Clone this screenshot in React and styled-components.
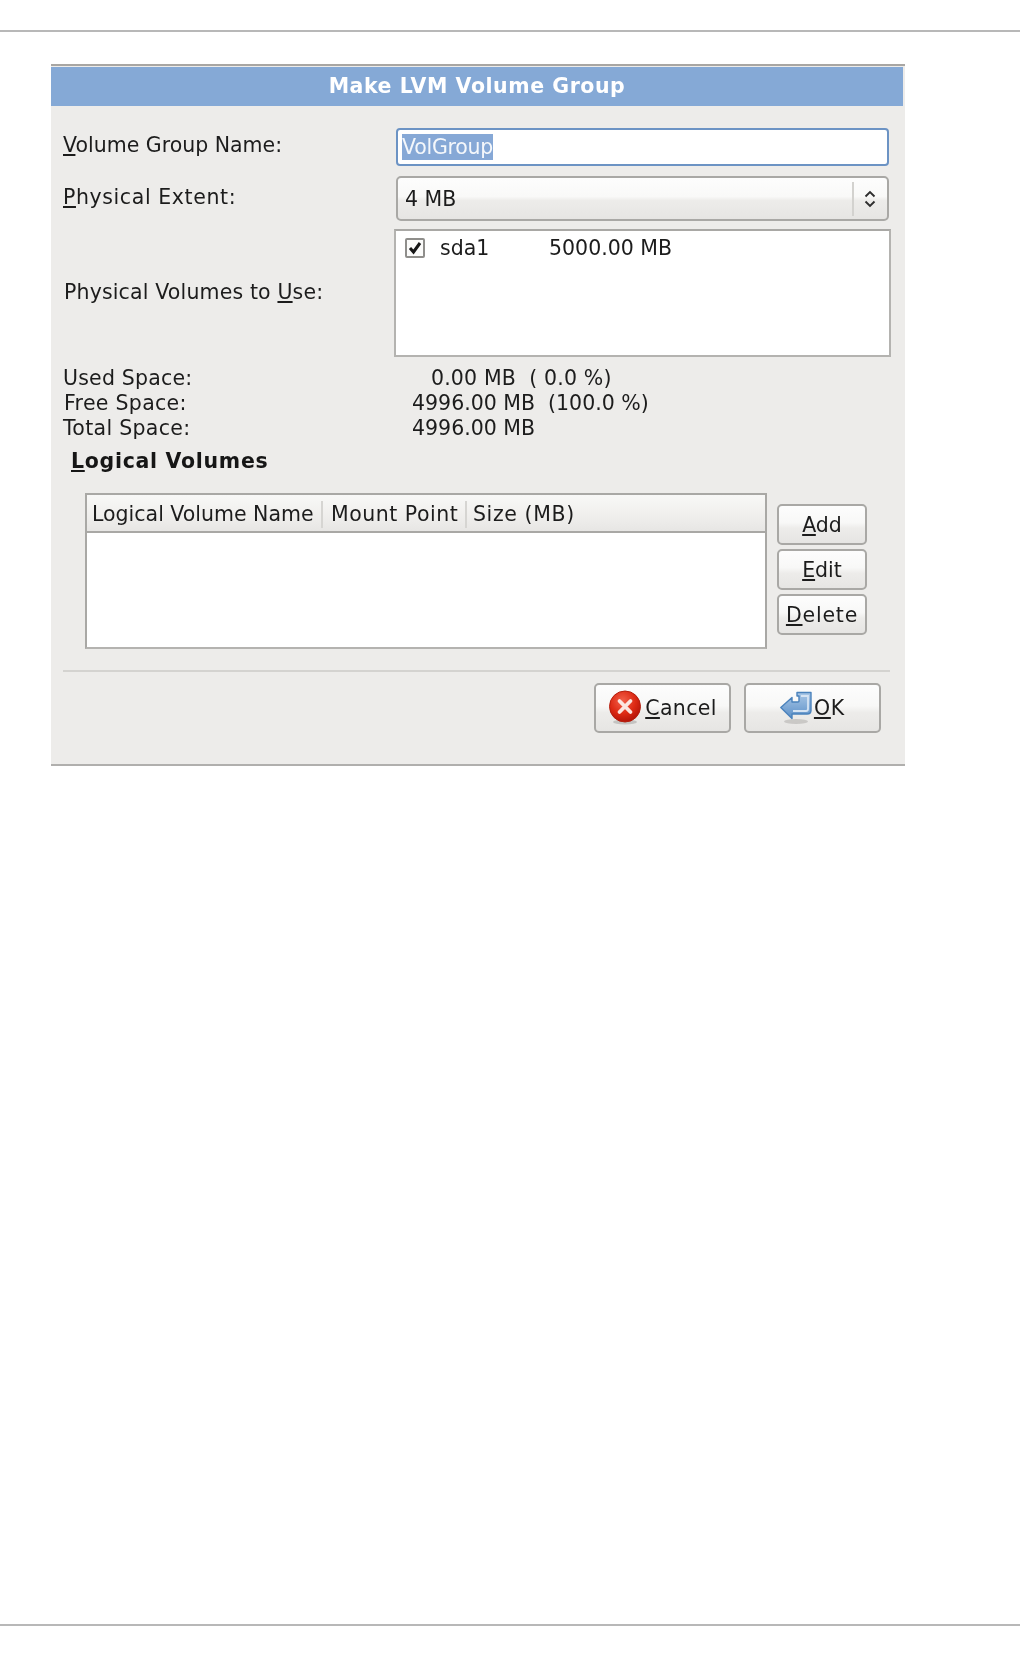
import React from "react";
import styled, { createGlobalStyle } from "styled-components";

const GlobalStyle = createGlobalStyle`
  html, body {
    margin: 0;
    padding: 0;
    background: #ffffff;
  }
  body {
    font-family: "DejaVu Sans", sans-serif;
    font-size: 20.5px;
    color: #1c1c1c;
  }
`;

const Page = styled.div`
  width: 1020px;
  height: 1656px;
  display: flex;
  flex-direction: column;
  overflow: hidden;
`;

const PageRule = styled.div`
  height: 2px;
  flex: none;
  background: #b8b8b8;
  margin: ${({ $margin }) => $margin};
`;

const Dialog = styled.div`
  width: 854px;
  height: 702px;
  flex: none;
  box-sizing: border-box;
  margin: 32px 0 0 51px;
  display: flex;
  flex-direction: column;
  background: #edecea;
  border-top: 2px solid #a8a6a3;
  border-bottom: 2px solid #b0afad;
  filter: blur(0.35px);
`;

const TitleBar = styled.div`
  height: 39px;
  flex: none;
  box-sizing: border-box;
  margin: 1px 2px 0 0;
  padding-bottom: 2px;
  background: #85a9d6;
  color: #ffffff;
  font-weight: bold;
  font-size: 20.5px;
  letter-spacing: 0.55px;
  display: flex;
  align-items: center;
  justify-content: center;
`;

const Body = styled.div`
  flex: 1;
  padding: 22px 14px 0 12px;
`;

const FormRow = styled.div`
  display: flex;
  align-items: center;
  margin-top: ${({ $top }) => $top || 0}px;
`;

const Label = styled.div`
  flex: 0 0 ${({ $width }) => $width}px;
  white-space: pre;
  box-sizing: border-box;
  padding-left: ${({ $indent }) => $indent || 0}px;
  padding-bottom: ${({ $lift }) => ($lift || 0) * 2}px;
  letter-spacing: ${({ $ls }) => $ls || 0}px;
`;

const Entry = styled.div`
  width: 493px;
  height: 38px;
  box-sizing: border-box;
  background: #ffffff;
  border: 2px solid #6c93c4;
  border-radius: 4px;
  display: flex;
  align-items: center;
  padding-left: 4px;
`;

const Selected = styled.span`
  background: #86a8d6;
  color: #f4f7fb;
  line-height: 26px;
  letter-spacing: -0.25px;
`;

const Combo = styled.div`
  width: 493px;
  height: 45px;
  box-sizing: border-box;
  border: 2px solid #a9a8a5;
  border-radius: 5px;
  background: linear-gradient(#fdfdfd 0%, #f9f9f8 45%, #edecea 55%, #e6e5e3 100%);
  display: flex;
  align-items: center;
  justify-content: space-between;
  padding-left: 7px;
`;

const ComboArrow = styled.div`
  width: 35px;
  height: 34px;
  box-sizing: border-box;
  padding-right: 2px;
  border-left: 2px solid #d3d2cf;
  display: flex;
  align-items: center;
  justify-content: center;
`;

const PvList = styled.div`
  width: 498px;
  height: 128px;
  box-sizing: border-box;
  background: #ffffff;
  border: 2px solid #b4b3b0;
  border-top-color: #a9a8a5;
  padding: 4px 0 0 9px;
  display: flex;
  align-items: flex-start;
`;

const PvRow = styled.div`
  display: flex;
  align-items: center;
  height: 25px;
`;

const Check = styled.div`
  width: 20px;
  height: 20px;
  flex: none;
  box-sizing: border-box;
  border: 2px solid #8f8e8b;
  border-radius: 2px;
  background: #fbfbfa;
  margin-right: 15px;
  display: flex;
  align-items: center;
  justify-content: center;
`;

const PvCell = styled.span`
  width: ${({ $width }) => $width}px;
  white-space: pre;
`;

const Stats = styled.div`
  margin-top: 9px;
`;

const StatRow = styled.div`
  display: flex;
  height: 25px;
  line-height: 25px;
`;

const StatLabel = styled.div`
  width: 349px;
  flex: none;
  box-sizing: border-box;
  padding-left: ${({ $indent }) => $indent || 0}px;
  letter-spacing: ${({ $ls }) => $ls || 0}px;
`;

const StatValue = styled.div`
  white-space: pre;
  padding-left: ${({ $indent }) => $indent || 0}px;
  letter-spacing: ${({ $ls }) => $ls || 0}px;
`;

const SectionTitle = styled.div`
  margin: 8px 0 0 8px;
  font-weight: bold;
  height: 25px;
  line-height: 25px;
  letter-spacing: 0.7px;
  color: #161616;
`;

const VolumesRow = styled.div`
  display: flex;
  align-items: flex-start;
  gap: 10px;
  margin: 19px 0 0 22px;
`;

const VolumeTable = styled.div`
  width: 682px;
  height: 156px;
  box-sizing: border-box;
  background: #ffffff;
  border: 2px solid #a9a8a5;
  border-bottom-color: #b4b3b0;
`;

const TableHead = styled.div`
  height: 38px;
  box-sizing: border-box;
  display: flex;
  align-items: center;
  padding-top: 3px;
  background: linear-gradient(#f8f8f7 0%, #f1f0ee 50%, #e7e6e4 100%);
  border-bottom: 2px solid #a9a8a5;
`;

const HeadCell = styled.div`
  white-space: pre;
  height: 27px;
  line-height: 27px;
  box-sizing: border-box;
  padding-left: ${({ $pad }) => $pad}px;
  width: ${({ $width }) => ($width ? `${$width}px` : "auto")};
  letter-spacing: ${({ $ls }) => $ls || 0}px;
  border-right: ${({ $last }) => ($last ? "none" : "2px solid #d6d5d2")};
`;

const SideButtons = styled.div`
  display: flex;
  flex-direction: column;
  gap: 4px;
  margin-top: 11px;
`;

const Button = styled.div`
  width: ${({ $width }) => $width}px;
  height: ${({ $height }) => $height}px;
  box-sizing: border-box;
  border: 2px solid #a9a8a5;
  border-radius: 5px;
  background: linear-gradient(#fdfdfd 0%, #f8f8f7 45%, #edecea 60%, #e6e5e3 100%);
  display: flex;
  align-items: center;
  justify-content: center;
  letter-spacing: ${({ $ls }) => $ls || 0}px;
`;

const Separator = styled.div`
  width: 827px;
  height: 2px;
  margin-top: 21px;
  background: #d4d3d0;
`;

const ActionRow = styled.div`
  display: flex;
  justify-content: flex-end;
  gap: 13px;
  margin-top: 11px;
  padding-right: 10px;
`;

const IconSlot = styled.svg`
  flex: none;
  margin-right: ${({ $gap }) => $gap || 0}px;
`;

const CancelIcon = () => (
  <IconSlot width="34" height="36" viewBox="0 0 34 36" $gap="3">
    <defs>
      <radialGradient id="cancelFill" cx="0.42" cy="0.32" r="0.75">
        <stop offset="0" stopColor="#f2614a" />
        <stop offset="0.55" stopColor="#dd2a14" />
        <stop offset="1" stopColor="#a90f06" />
      </radialGradient>
    </defs>
    <ellipse cx="17" cy="32" rx="12" ry="2.5" fill="#8d8c8a" opacity="0.4" />
    <circle cx="17" cy="16.5" r="15.5" fill="url(#cancelFill)" stroke="#b5200f" strokeWidth="1" />
    <path d="M11.5 11l11 11M22.5 11l-11 11" stroke="#fbe6e0" strokeWidth="3.8" strokeLinecap="round" />
  </IconSlot>
);

const OkIcon = () => (
  <IconSlot width="33" height="34" viewBox="0 0 33 34" $gap="1">
    <defs>
      <linearGradient id="okFill" x1="0" y1="0" x2="0" y2="1">
        <stop offset="0" stopColor="#a9c7e6" />
        <stop offset="0.55" stopColor="#7fa9d6" />
        <stop offset="1" stopColor="#5b8fc6" />
      </linearGradient>
    </defs>
    <ellipse cx="16" cy="30.5" rx="12" ry="2.5" fill="#9a9997" opacity="0.4" />
    <path
      d="M17 1.5h14v18q0 3.5-4 3.5H12v4.5L.8 16.5 12 6.5V11h6q1 0 1-1V5h-2z"
      fill="url(#okFill)"
      stroke="#4a82bc"
      strokeWidth="1.4"
      strokeLinejoin="round"
    />
    <path d="M21 5h7v13q0 2-2 2H13" fill="none" stroke="#d6e4f3" strokeWidth="1.8" />
  </IconSlot>
);

const App = () => (
  <>
    <GlobalStyle />
    <Page>
      <PageRule $margin="30px 0 0" />
      <Dialog>
        <TitleBar>Make LVM Volume Group</TitleBar>
        <Body>
          <FormRow>
            <Label $width={333} $lift={2}>
              <u>V</u>olume Group Name:
            </Label>
            <Entry>
              <Selected>VolGroup</Selected>
            </Entry>
          </FormRow>
          <FormRow $top={10}>
            <Label $width={333} $lift={2} $ls={0.6}>
              <u>P</u>hysical Extent:
            </Label>
            <Combo>
              <span>4 MB</span>
              <ComboArrow>
                <svg width="14" height="20" viewBox="0 0 14 20">
                  <path
                    d="M2.5 7.5L7 3l4.5 4.5M2.5 12.5L7 17l4.5-4.5"
                    fill="none"
                    stroke="#2e2e2e"
                    strokeWidth="1.9"
                  />
                </svg>
              </ComboArrow>
            </Combo>
          </FormRow>
          <FormRow $top={8}>
            <Label $width={331} $indent={1} $lift={1} $ls={0.15}>
              Physical Volumes to <u>U</u>se:
            </Label>
            <PvList>
              <PvRow>
                <Check>
                  <svg width="16" height="16" viewBox="0 0 16 16">
                    <path d="M3 8l3.5 4L13 3" fill="none" stroke="#161616" strokeWidth="3" />
                  </svg>
                </Check>
                <PvCell $width={109}>sda1</PvCell>
                <PvCell>5000.00 MB</PvCell>
              </PvRow>
            </PvList>
          </FormRow>
          <Stats>
            <StatRow>
              <StatLabel $ls={0.2}>Used Space:</StatLabel>
              <StatValue $indent={19} $ls={0.15}>0.00 MB  ( 0.0 %)</StatValue>
            </StatRow>
            <StatRow>
              <StatLabel $indent={1} $ls={0.3}>Free Space:</StatLabel>
              <StatValue>4996.00 MB  (100.0 %)</StatValue>
            </StatRow>
            <StatRow>
              <StatLabel $ls={0.3}>Total Space:</StatLabel>
              <StatValue>4996.00 MB</StatValue>
            </StatRow>
          </Stats>
          <SectionTitle>
            <u>L</u>ogical Volumes
          </SectionTitle>
          <VolumesRow>
            <VolumeTable>
              <TableHead>
                <HeadCell $pad={5} $width={236}>Logical Volume Name</HeadCell>
                <HeadCell $pad={8} $width={144} $ls={0.5}>Mount Point</HeadCell>
                <HeadCell $pad={6} $ls={0.6} $last>Size (MB)</HeadCell>
              </TableHead>
            </VolumeTable>
            <SideButtons>
              <Button $width={90} $height={41}>
                <span>
                  <u>A</u>dd
                </span>
              </Button>
              <Button $width={90} $height={41}>
                <span>
                  <u>E</u>dit
                </span>
              </Button>
              <Button $width={90} $height={41} $ls={0.8}>
                <span>
                  <u>D</u>elete
                </span>
              </Button>
            </SideButtons>
          </VolumesRow>
          <Separator />
          <ActionRow>
            <Button $width={137} $height={50} $ls={0.35}>
              <CancelIcon />
              <span>
                <u>C</u>ancel
              </span>
            </Button>
            <Button $width={137} $height={50} $ls={0.8}>
              <OkIcon />
              <span>
                <u>O</u>K
              </span>
            </Button>
          </ActionRow>
        </Body>
      </Dialog>
      <PageRule $margin="auto 0 30px" />
    </Page>
  </>
);

export default App;
